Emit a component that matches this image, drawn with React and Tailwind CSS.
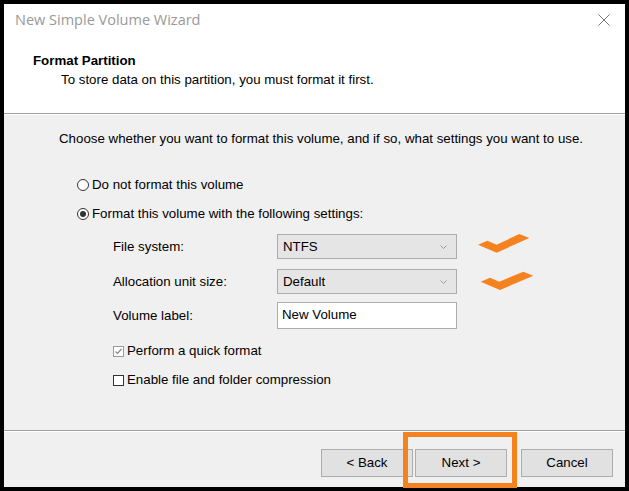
import { useState } from 'react';

// small drawn pieces of the old Win32 dialog
function Radio({ checked }) {
  return (
    <span className="w-[12px] h-[12px] rounded-full border border-[#333333] bg-white flex items-center justify-center">
      {checked && <span className="w-[6px] h-[6px] rounded-full bg-[#333333]" />}
    </span>
  );
}

function Check({ checked, dim }) {
  return (
    <span
      className={
        'w-[11px] h-[11px] border bg-white flex items-center justify-center ' +
        (dim ? 'border-[#9a9a9a]' : 'border-[#333333]')
      }
    >
      {checked && (
        <svg width="9" height="9" viewBox="0 0 9 9">
          <polyline points="1.5,4.5 3.5,6.5 7.5,2" fill="none" stroke="#888888" strokeWidth="1.2" />
        </svg>
      )}
    </span>
  );
}

function Combo({ value }) {
  return (
    <div className="w-[180px] h-[25px] bg-[#e5e5e5] border border-[#adadad] flex items-center justify-between pl-[5px] pr-[9px]">
      <span>{value}</span>
      <svg width="7" height="4" viewBox="0 0 7 4">
        <polyline points="0.5,0.5 3.5,3.5 6.5,0.5" fill="none" stroke="#9a9a9a" strokeWidth="1" />
      </svg>
    </div>
  );
}

function Btn({ children }) {
  return (
    <button className="w-[92px] h-[28px] bg-[#e1e1e1] border border-[#adadad] text-center">
      {children}
    </button>
  );
}

export default function App() {
  const [mode, setMode] = useState('format');
  const [label, setLabel] = useState('New Volume');

  return (
    <div className="w-[629px] h-[491px] bg-black p-[4px] font-['Liberation_Sans',Arial,sans-serif] text-[13.3px] leading-[16px] text-black">
      <div className="relative w-full h-full flex flex-col bg-[#f0f0f0]">
        {/* header */}
        <div className="h-[110px] bg-white border-b border-[#a0a0a0] flex flex-col">
          <div className="h-[32px] flex items-center justify-between pl-[11px] pr-[15px]">
            <span className="font-['Open_Sans',sans-serif] text-[14.5px] text-[#999999]">New Simple Volume Wizard</span>
            <svg width="12" height="12" viewBox="0 0 12 12">
              <path d="M0.5 0.5 L11.5 11.5 M11.5 0.5 L0.5 11.5" stroke="#777777" strokeWidth="1" />
            </svg>
          </div>
          <div className="pl-[29px] pt-[17px]">
            <div className="font-bold">Format Partition</div>
            <div className="pl-[28px] mt-[3px]">To store data on this partition, you must format it first.</div>
          </div>
        </div>

        {/* body */}
        <div className="flex-1 border-t border-white border-b border-b-[#a0a0a0] pl-[55px] pt-[16px]">
          <div>Choose whether you want to format this volume, and if so, what settings you want to use.</div>

          <div className="pl-[18px] mt-[30px] flex flex-col gap-[13px]">
            <label className="flex items-center gap-[3px]" onClick={() => setMode('none')}>
              <Radio checked={mode === 'none'} />
              <span>Do not format this volume</span>
            </label>
            <label className="flex items-center gap-[3px]" onClick={() => setMode('format')}>
              <Radio checked={mode === 'format'} />
              <span>Format this volume with the following settings:</span>
            </label>
          </div>

          <div className="pl-[54px] mt-[12px] flex flex-col">
            <div className="flex items-center">
              <span className="w-[164px]">File system:</span>
              <Combo value="NTFS" />
            </div>
            <div className="flex items-center mt-[10px]">
              <span className="w-[164px]">Allocation unit size:</span>
              <Combo value="Default" />
            </div>
            <div className="flex items-center mt-[8px]">
              <span className="w-[164px]">Volume label:</span>
              <input
                className="w-[180px] h-[27px] bg-white border border-[#abadb3] px-[4px] pb-[3px] outline-none"
                value={label}
                onChange={(e) => setLabel(e.target.value)}
              />
            </div>
          </div>

          <div className="pl-[54px] mt-[14px] flex flex-col gap-[13px]">
            <div className="flex items-center gap-[3px]">
              <Check checked dim />
              <span>Perform a quick format</span>
            </div>
            <div className="flex items-center gap-[3px]">
              <Check />
              <span>Enable file and folder compression</span>
            </div>
          </div>
        </div>

        {/* footer */}
        <div className="h-[56px] border-t border-white flex justify-end items-start pt-[17px] pr-[12px]">
          <div className="flex">
            <Btn>&lt; Back</Btn>
            <span className="w-[2px]" />
            <Btn>Next &gt;</Btn>
          </div>
          <span className="w-[14px]" />
          <Btn>Cancel</Btn>
        </div>

        {/* orange annotations drawn on top of the screenshot */}
        <div className="absolute left-[399px] top-[428px] w-[114px] h-[56px] border-[5px] border-[#f5821f]" />
        <svg className="absolute left-0 top-0 pointer-events-none" width="621" height="483">
          <polygon points="474,240.7 483.3,236.7 492.7,240.7 515.3,230 525.3,234 492.7,248.7" fill="#f5821f" />
          <polygon points="476.7,277.7 486,273.7 495.3,277.7 519.3,267.7 529.3,271.7 496,286" fill="#f5821f" />
        </svg>
      </div>
    </div>
  );
}
